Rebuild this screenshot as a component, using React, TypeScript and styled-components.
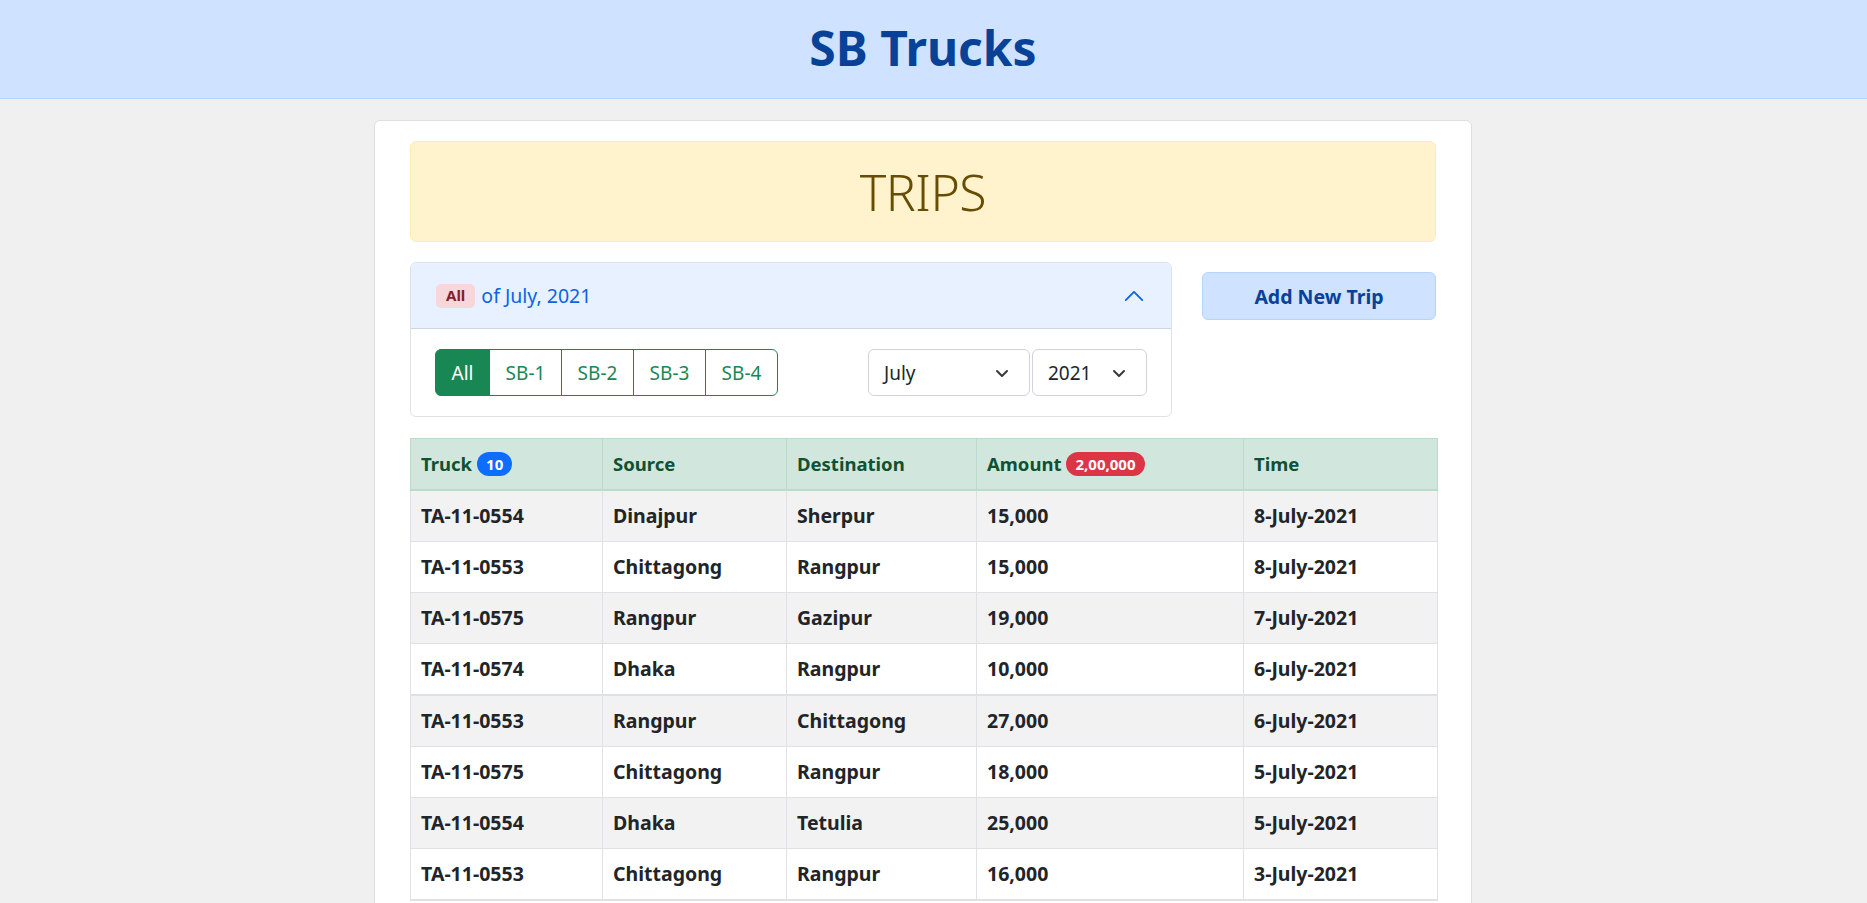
import React from "react";
import styled, { createGlobalStyle, css } from "styled-components";

const GlobalStyle = createGlobalStyle`
  html, body {
    margin: 0;
    padding: 0;
    overflow: hidden;
  }
  body {
    background-color: #f0f0f0;
    font-family: "Noto Sans", "Open Sans", Arial, sans-serif;
    color: #212529;
  }
  * {
    box-sizing: border-box;
  }
`;

const Header = styled.header`
  height: 99px;
  background-color: #cfe2ff;
  border-bottom: 1px solid #b6d4fe;
  display: flex;
  align-items: center;
  justify-content: center;
  padding-right: 21px;
`;

const Brand = styled.h1`
  margin: 0;
  font-size: 48px;
  font-weight: 700;
  color: #084298;
  line-height: 1;
  padding-bottom: 2px;
`;

const Main = styled.main`
  display: flex;
  justify-content: center;
  padding: 21px 21px 0 0;
`;

const Card = styled.div`
  width: 1098px;
  background-color: #fff;
  border: 1px solid #dfdfdf;
  border-radius: 6px;
  padding: 20px 35px;
`;

const TitleAlert = styled.div`
  height: 101px;
  background-color: #fff3cd;
  border: 1px solid #ffecb5;
  border-radius: 6px;
  color: #664d03;
  display: flex;
  align-items: center;
  justify-content: center;
  font-size: 50px;
  font-weight: 300;
  letter-spacing: -0.5px;
`;

const Toolbar = styled.div`
  display: grid;
  grid-template-columns: 762px 234px;
  justify-content: space-between;
  align-items: start;
  margin: 20px 0 21px;
`;

const FilterCard = styled.div`
  border: 1px solid #dee2e6;
  border-radius: 6px;
  overflow: hidden;
`;

const FilterHead = styled.div`
  height: 66px;
  background-color: #e7f1ff;
  border-bottom: 1px solid #cdd6e2;
  display: flex;
  align-items: center;
  justify-content: space-between;
  padding: 0 26px 0 25px;
  color: #0c63e4;
  font-size: 19.5px;
`;

const HeadTitle = styled.div`
  display: flex;
  align-items: center;
  gap: 6px;
`;

const Badge = styled.span<{ tone: "light-danger" | "primary" | "danger"; pill?: boolean }>`
  display: inline-flex;
  align-items: center;
  justify-content: center;
  height: 24px;
  padding: 0 ${({ pill }) => (pill ? "9px" : "10px")};
  font-size: 15px;
  font-weight: 700;
  line-height: 1;
  border-radius: ${({ pill }) => (pill ? "12px" : "5px")};
  ${({ tone }) =>
    tone === "light-danger"
      ? css`
          background-color: #f8d7da;
          color: #842029;
        `
      : tone === "primary"
      ? css`
          background-color: #0d6efd;
          color: #fff;
        `
      : css`
          background-color: #dc3545;
          color: #fff;
        `}
`;

const FilterBody = styled.div`
  display: flex;
  align-items: center;
  justify-content: space-between;
  padding: 20px 24px;
`;

const ButtonGroup = styled.div`
  display: flex;
`;

const TruckButton = styled.button<{ active?: boolean; width: number }>`
  height: 47px;
  width: ${({ width }) => width}px;
  font-family: inherit;
  font-size: 19px;
  padding: 0;
  border: 1px solid #198754;
  margin-left: -1px;
  background-color: ${({ active }) => (active ? "#198754" : "#fff")};
  color: ${({ active }) => (active ? "#fff" : "#198754")};
  &:first-child {
    margin-left: 0;
    border-radius: 6px 0 0 6px;
  }
  &:last-child {
    border-radius: 0 6px 6px 0;
  }
`;

const Selects = styled.div`
  display: flex;
  gap: 2px;
`;

const SelectBox = styled.div<{ width: number }>`
  height: 47px;
  width: ${({ width }) => width}px;
  border: 1px solid #ced4da;
  border-radius: 6px;
  display: flex;
  align-items: center;
  justify-content: space-between;
  padding: 0 19px 0 15px;
  font-size: 19px;
  color: #212529;
  background-color: #fff;
`;

const AddButton = styled.button`
  height: 48px;
  margin-top: 10px;
  background-color: #cfe2ff;
  border: 1px solid #b6d4fe;
  border-radius: 6px;
  color: #084298;
  font-family: inherit;
  font-size: 19.5px;
  font-weight: 700;
`;

const Table = styled.table`
  width: 100%;
  border-collapse: collapse;
  table-layout: fixed;
  font-weight: 700;
`;

const HeadCell = styled.th`
  background-color: #d1e7dd;
  color: #0f5132;
  text-align: left;
  padding: 12px 10px;
  font-size: 18.5px;
  line-height: 26px;
  border: 1px solid #badbcc;
  border-bottom-width: 2px;
  white-space: nowrap;
`;

const HeadLabel = styled.span`
  display: inline-flex;
  align-items: center;
  gap: 5px;
`;

const Row = styled.tr<{ striped: boolean; groupEnd: boolean }>`
  background-color: ${({ striped }) => (striped ? "#f2f2f2" : "#fff")};
  td {
    border-bottom-width: ${({ groupEnd }) => (groupEnd ? "2px" : "1px")};
  }
`;

const Cell = styled.td`
  padding: 12px 10px;
  font-size: 19.5px;
  line-height: 26px;
  border: 1px solid #dee2e6;
  color: #212529;
  white-space: nowrap;
`;

const Chevron = ({ up, size, color, stroke }: { up?: boolean; size: number; color: string; stroke: number }) => (
  <svg width={size} height={size} viewBox="0 0 16 16" fill="none">
    <path
      d={up ? "M2 11 L8 5 L14 11" : "M3 6 L8 11 L13 6"}
      stroke={color}
      strokeWidth={stroke}
      strokeLinecap="round"
      strokeLinejoin="round"
    />
  </svg>
);

const trips = [
  ["TA-11-0554", "Dinajpur", "Sherpur", "15,000", "8-July-2021"],
  ["TA-11-0553", "Chittagong", "Rangpur", "15,000", "8-July-2021"],
  ["TA-11-0575", "Rangpur", "Gazipur", "19,000", "7-July-2021"],
  ["TA-11-0574", "Dhaka", "Rangpur", "10,000", "6-July-2021"],
  ["TA-11-0553", "Rangpur", "Chittagong", "27,000", "6-July-2021"],
  ["TA-11-0575", "Chittagong", "Rangpur", "18,000", "5-July-2021"],
  ["TA-11-0554", "Dhaka", "Tetulia", "25,000", "5-July-2021"],
  ["TA-11-0553", "Chittagong", "Rangpur", "16,000", "3-July-2021"],
];

const columnWidths = [192, 184, 190, 267, 194];

const App = () => {
  return (
    <>
      <GlobalStyle />
      <Header>
        <Brand>SB Trucks</Brand>
      </Header>
      <Main>
        <Card>
          <TitleAlert>TRIPS</TitleAlert>
          <Toolbar>
            <FilterCard>
              <FilterHead>
                <HeadTitle>
                  <Badge tone="light-danger">All</Badge>
                  of July, 2021
                </HeadTitle>
                <Chevron up size={22} color="#0c63e4" stroke={1.3} />
              </FilterHead>
              <FilterBody>
                <ButtonGroup>
                  <TruckButton active width={55}>
                    All
                  </TruckButton>
                  {["SB-1", "SB-2", "SB-3", "SB-4"].map((t) => (
                    <TruckButton key={t} width={73}>
                      {t}
                    </TruckButton>
                  ))}
                </ButtonGroup>
                <Selects>
                  <SelectBox width={162}>
                    July
                    <Chevron size={16} color="#343a40" stroke={2} />
                  </SelectBox>
                  <SelectBox width={115}>
                    2021
                    <Chevron size={16} color="#343a40" stroke={2} />
                  </SelectBox>
                </Selects>
              </FilterBody>
            </FilterCard>
            <AddButton>Add New Trip</AddButton>
          </Toolbar>
          <Table>
            <colgroup>
              {columnWidths.map((w, i) => (
                <col key={i} style={{ width: w }} />
              ))}
            </colgroup>
            <thead>
              <tr>
                <HeadCell>
                  <HeadLabel>
                    Truck
                    <Badge tone="primary" pill>
                      10
                    </Badge>
                  </HeadLabel>
                </HeadCell>
                <HeadCell>Source</HeadCell>
                <HeadCell>Destination</HeadCell>
                <HeadCell>
                  <HeadLabel>
                    Amount
                    <Badge tone="danger" pill>
                      2,00,000
                    </Badge>
                  </HeadLabel>
                </HeadCell>
                <HeadCell>Time</HeadCell>
              </tr>
            </thead>
            <tbody>
              {trips.map((trip, i) => (
                <Row key={i} striped={i % 2 === 0} groupEnd={i % 4 === 3}>
                  {trip.map((value, j) => (
                    <Cell key={j}>{value}</Cell>
                  ))}
                </Row>
              ))}
            </tbody>
          </Table>
        </Card>
      </Main>
    </>
  );
};

export default App;
